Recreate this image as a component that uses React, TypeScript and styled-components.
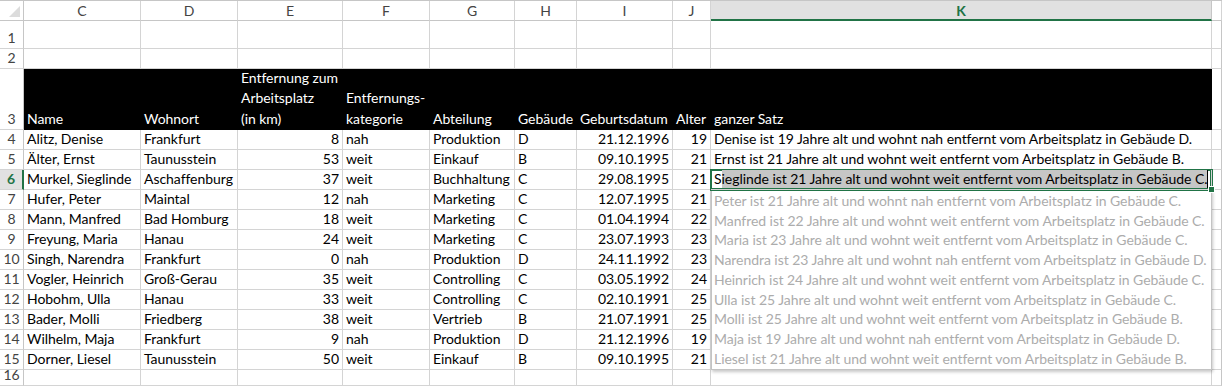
import React from "react";
import styled, { createGlobalStyle, css } from "styled-components";

type Person = {
  name: string;
  city: string;
  km: number;
  cat: "nah" | "weit";
  dept: string;
  building: string;
  born: string;
  age: number;
};

const people: Person[] = [
  { name: "Alitz, Denise", city: "Frankfurt", km: 8, cat: "nah", dept: "Produktion", building: "D", born: "21.12.1996", age: 19 },
  { name: "Älter, Ernst", city: "Taunusstein", km: 53, cat: "weit", dept: "Einkauf", building: "B", born: "09.10.1995", age: 21 },
  { name: "Murkel, Sieglinde", city: "Aschaffenburg", km: 37, cat: "weit", dept: "Buchhaltung", building: "C", born: "29.08.1995", age: 21 },
  { name: "Hufer, Peter", city: "Maintal", km: 12, cat: "nah", dept: "Marketing", building: "C", born: "12.07.1995", age: 21 },
  { name: "Mann, Manfred", city: "Bad Homburg", km: 18, cat: "weit", dept: "Marketing", building: "C", born: "01.04.1994", age: 22 },
  { name: "Freyung, Maria", city: "Hanau", km: 24, cat: "weit", dept: "Marketing", building: "C", born: "23.07.1993", age: 23 },
  { name: "Singh, Narendra", city: "Frankfurt", km: 0, cat: "nah", dept: "Produktion", building: "D", born: "24.11.1992", age: 23 },
  { name: "Vogler, Heinrich", city: "Groß-Gerau", km: 35, cat: "weit", dept: "Controlling", building: "C", born: "03.05.1992", age: 24 },
  { name: "Hobohm, Ulla", city: "Hanau", km: 33, cat: "weit", dept: "Controlling", building: "C", born: "02.10.1991", age: 25 },
  { name: "Bader, Molli", city: "Friedberg", km: 38, cat: "weit", dept: "Vertrieb", building: "B", born: "21.07.1991", age: 25 },
  { name: "Wilhelm, Maja", city: "Frankfurt", km: 9, cat: "nah", dept: "Produktion", building: "D", born: "21.12.1996", age: 19 },
  { name: "Dorner, Liesel", city: "Taunusstein", km: 50, cat: "weit", dept: "Einkauf", building: "B", born: "09.10.1995", age: 21 },
];

const sentence = (p: Person) =>
  `${p.name.split(", ")[1]} ist ${p.age} Jahre alt und wohnt ${p.cat} entfernt vom Arbeitsplatz in Gebäude ${p.building}.`;

const letters = ["C", "D", "E", "F", "G", "H", "I", "J", "K", ""];
const activeRow = 6;
const GREEN = "#217346";
const GRID = "#d4d4d4";

// wrapped header lines of row 3
const headings: string[][] = [
  ["Name"],
  ["Wohnort"],
  ["Entfernung zum", "Arbeitsplatz", "(in km)"],
  ["Entfernungs-", "kategorie"],
  ["Abteilung"],
  ["Gebäude"],
  ["Geburtsdatum"],
  ["Alter"],
  ["ganzer Satz"],
];

const GlobalStyle = createGlobalStyle`
  html, body { margin: 0; padding: 0; background: #fff; }
  body { font-family: Lato, "Liberation Sans", sans-serif; }
`;

const Sheet = styled.div`
  display: grid;
  grid-template-columns: 24px 117px 97px 105px 87px 85px 62px 96px 38px 501px 10px;
  grid-template-rows: 20px 28px 20px 61px repeat(12, 20px) 16px;
  width: 1222px;
  height: 386px;
  border-top: 1px solid #c6c6c6;
  box-sizing: border-box;
  overflow: hidden;
  font-size: 14px;
  letter-spacing: -0.05px;
  color: #000;
`;

const Corner = styled.div`
  position: relative;
  border-right: 1px solid #c6c6c6;
  border-bottom: 1px solid #c6c6c6;
  &::after {
    content: "";
    position: absolute;
    right: 3px;
    bottom: 3px;
    border-style: solid;
    border-width: 0 0 11px 11px;
    border-color: transparent transparent #dcdcdc transparent;
  }
`;

const ColHead = styled.div<{ $active?: boolean }>`
  display: flex;
  align-items: center;
  justify-content: center;
  border-right: 1px solid ${GRID};
  border-bottom: 1px solid #c6c6c6;
  color: #444;
  ${(p) =>
    p.$active &&
    css`
      background: #e1e1e1;
      border-bottom: 2px solid ${GREEN};
      border-right-color: #c6c6c6;
      color: ${GREEN};
      font-weight: 700;
    `}
`;

const RowHead = styled.div<{ $active?: boolean }>`
  display: flex;
  align-items: flex-end;
  justify-content: center;
  padding-bottom: 1px;
  box-sizing: border-box;
  border-right: 1px solid #c6c6c6;
  border-bottom: 1px solid ${GRID};
  color: #444;
  line-height: 18px;
  ${(p) =>
    p.$active &&
    css`
      background: #e1e1e1;
      border-right: 2px solid ${GREEN};
      color: ${GREEN};
      font-weight: 700;
    `}
`;

const Cell = styled.div<{ $right?: boolean }>`
  display: flex;
  align-items: flex-end;
  justify-content: ${(p) => (p.$right ? "flex-end" : "flex-start")};
  padding: 0 3px 1px;
  box-sizing: border-box;
  border-right: 1px solid ${GRID};
  border-bottom: 1px solid ${GRID};
  white-space: nowrap;
  line-height: 18px;
  min-width: 0;
`;

const TitleCell = styled.div`
  display: flex;
  flex-direction: column;
  justify-content: flex-end;
  padding: 0 3px 1px;
  box-sizing: border-box;
  background: #000;
  color: #fff;
  white-space: nowrap;
  line-height: 20.3px;
`;

const SelectedCell = styled(Cell)`
  position: relative;
  z-index: 2;
  box-shadow: inset 0 0 0 1px ${GREEN}, 0 0 0 1px ${GREEN};
  &::after {
    content: "";
    position: absolute;
    right: -4px;
    bottom: -4px;
    width: 5px;
    height: 5px;
    background: ${GREEN};
    border: 1px solid #fff;
  }
`;

const Picked = styled.span`
  background: #c6c6c6;
  border-right: 1px solid #000;
`;

const Preview = styled.div`
  grid-column: 10;
  grid-row: 8 / 17;
  z-index: 1;
  background: #fff;
  border: 1px solid #c3c3c3;
  box-shadow: 1px 2px 3px rgba(0, 0, 0, 0.22);
  box-sizing: border-box;
  display: flex;
  flex-direction: column;
`;

const PreviewLine = styled.div`
  height: 20px;
  padding: 0 2px 1px;
  box-sizing: border-box;
  display: flex;
  align-items: flex-end;
  line-height: 18px;
  color: #acacac;
  white-space: nowrap;
`;

const Filler = styled(Cell)`
  border-right-color: #c6c6c6;
`;

function EmptyRow({ n }: { n: number }) {
  return (
    <>
      <RowHead>{n}</RowHead>
      {letters.map((l, i) => (i === 9 ? <Filler key={i} /> : <Cell key={i} />))}
    </>
  );
}

export default function App() {
  return (
    <>
      <GlobalStyle />
      <Sheet>
        <Corner />
        {letters.map((l, i) => (
          <ColHead key={i} $active={l === "K"}>
            {l}
          </ColHead>
        ))}

        <EmptyRow n={1} />
        <EmptyRow n={2} />

        <RowHead>3</RowHead>
        {headings.map((lines) => (
          <TitleCell key={lines[0]}>
            {lines.map((t) => (
              <div key={t}>{t}</div>
            ))}
          </TitleCell>
        ))}
        <Filler />

        {people.map((p, i) => {
          const row = i + 4;
          const text = sentence(p);
          return (
            <React.Fragment key={p.name}>
              <RowHead $active={row === activeRow}>{row}</RowHead>
              <Cell>{p.name}</Cell>
              <Cell>{p.city}</Cell>
              <Cell $right>{p.km}</Cell>
              <Cell>{p.cat}</Cell>
              <Cell>{p.dept}</Cell>
              <Cell>{p.building}</Cell>
              <Cell $right>{p.born}</Cell>
              <Cell $right>{p.age}</Cell>
              {row < activeRow && <Cell>{text}</Cell>}
              {row === activeRow && (
                <SelectedCell>
                  {text.slice(0, 1)}
                  <Picked>{text.slice(1)}</Picked>
                </SelectedCell>
              )}
              <Filler />
            </React.Fragment>
          );
        })}

        <Preview>
          {people.slice(activeRow - 3).map((p) => (
            <PreviewLine key={p.name}>{sentence(p)}</PreviewLine>
          ))}
        </Preview>

        <EmptyRow n={16} />
      </Sheet>
    </>
  );
}
